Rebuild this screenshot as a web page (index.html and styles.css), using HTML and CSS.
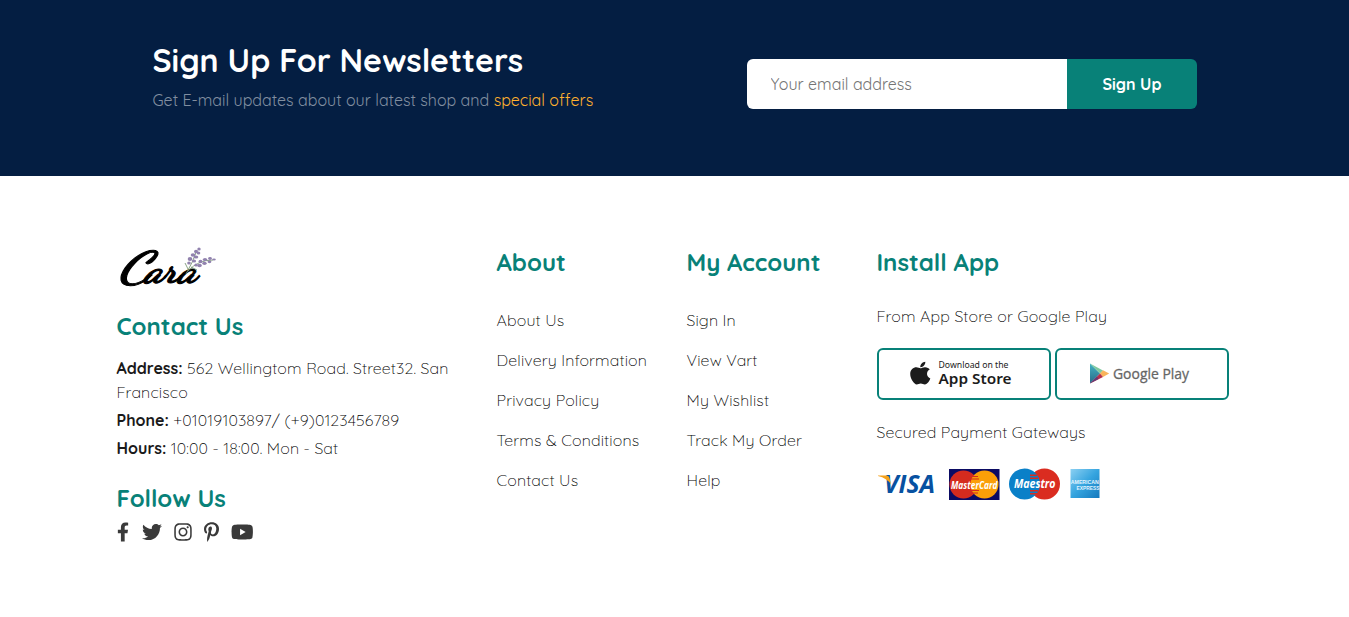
FILE: index.html
```
<!DOCTYPE html>
<html lang="en">
<head>
<meta charset="utf-8">
<title>Cara</title>
<link rel="stylesheet" href="styles.css">
</head>
<body>
<section class="newsletter">
  <div class="news-text">
    <h2>Sign Up For Newsletters</h2>
    <p>Get E-mail updates about our latest shop and <span>special offers</span></p>
  </div>
  <form class="news-form">
    <input type="text" placeholder="Your email address">
    <button type="button">Sign Up</button>
  </form>
</section>
<footer class="footer">
  <div class="col contact">
    <svg class="logo" viewBox="0 0 104 40" width="104" height="40">
      <g class="logo-word" transform="translate(.5 34.500)">
        <text class="logo-cap" x="0" y="0" textLength="32" lengthAdjust="spacingAndGlyphs">C</text>
        <text class="logo-rest" x="27" y="0" textLength="52" lengthAdjust="spacingAndGlyphs">ara</text>
      </g>
      <g fill="none" stroke="#7d9a78" stroke-width=".9"><path d="M69 27Q76 15 80 3M71 24Q81 13 96 13M71 22L68 16M74 20L80 23"/></g>
      <g fill="#9182ae">
        <ellipse cx="82" cy="2" rx="1.7" ry="1.5"/><ellipse cx="79" cy="4.500" rx="2" ry="1.700"/><ellipse cx="81.500" cy="6" rx="1.800" ry="1.600"/><ellipse cx="76" cy="8" rx="2.300" ry="1.800"/><ellipse cx="79" cy="10" rx="2.300" ry="1.600"/><ellipse cx="73" cy="12" rx="2.300" ry="1.900"/><ellipse cx="77" cy="14" rx="2.100" ry="1.600"/><ellipse cx="72" cy="16" rx="1.800" ry="1.500"/>
        <ellipse cx="97" cy="12.500" rx="1.800" ry="1.100"/><ellipse cx="93" cy="11.500" rx="1.900" ry="1.400"/><ellipse cx="92.500" cy="14.800" rx="1.900" ry="1.400"/><ellipse cx="88" cy="12.500" rx="2.200" ry="1.600"/><ellipse cx="87.500" cy="16.300" rx="2.200" ry="1.600"/><ellipse cx="83.500" cy="14.500" rx="2" ry="1.700"/><ellipse cx="82.500" cy="18.500" rx="2.300" ry="1.700"/><ellipse cx="79" cy="18" rx="1.700" ry="1.500"/>
      </g>
    </svg>
    <h4 class="h-contact">Contact Us</h4>
    <p class="l-addr"><strong>Address:</strong> 562 Wellingtom Road. Street32. San<br><span class="l-city">Francisco</span></p>
    <p class="l-phone"><strong>Phone:</strong> +01019103897/ (+9)0123456789</p>
    <p class="l-hours"><strong>Hours:</strong> 10:00 - 18:00. Mon - Sat</p>
    <h4 class="h-follow">Follow Us</h4>
    <div class="social">
      <svg width="12" height="20" viewBox="0 0 320 512"><path d="M279.140 288l14.220-92.660h-88.910v-60.130c0-25.350 12.420-50.060 52.240-50.060h40.420V6.260S260.430 0 225.360 0c-73.220 0-121.080 44.380-121.080 124.720v70.620H22.890V288h81.390v224h100.170V288z"/></svg>
      <svg width="20" height="20" viewBox="0 0 512 512"><path d="M459.370 151.716c.325 4.548.325 9.097.325 13.645 0 138.720-105.583 298.558-298.558 298.558-59.452 0-114.680-17.219-161.137-47.106 8.447.974 16.568 1.299 25.340 1.299 49.055 0 94.213-16.568 130.274-44.832-46.132-.975-84.792-31.188-98.112-72.772 6.498.974 12.995 1.624 19.818 1.624 9.421 0 18.843-1.300 27.614-3.573-48.081-9.747-84.143-51.980-84.143-102.985v-1.299c13.969 7.797 30.214 12.670 47.431 13.319-28.264-18.843-46.781-51.005-46.781-87.391 0-19.492 5.197-37.360 14.294-52.954 51.655 63.675 129.300 105.258 216.365 109.807-1.624-7.797-2.599-15.918-2.599-24.040 0-57.828 46.782-104.934 104.934-104.934 30.213 0 57.502 12.670 76.670 33.137 23.715-4.548 46.456-13.320 66.599-25.340-7.798 24.366-24.366 44.833-46.132 57.827 21.117-2.273 41.584-8.122 60.426-16.243-14.292 20.791-32.161 39.308-52.628 54.253z"/></svg>
      <svg width="18" height="20" viewBox="0 0 448 512"><path d="M224.100 141c-63.600 0-114.900 51.300-114.900 114.900s51.300 114.900 114.900 114.900S339 319.500 339 255.900 287.700 141 224.100 141zm0 189.600c-41.100 0-74.700-33.500-74.700-74.700s33.500-74.700 74.700-74.700 74.700 33.500 74.700 74.700-33.600 74.700-74.700 74.700zm146.400-194.300c0 14.900-12 26.800-26.800 26.800-14.900 0-26.800-12-26.800-26.800s12-26.800 26.800-26.800 26.800 12 26.800 26.800zm76.100 27.200c-1.700-35.900-9.900-67.700-36.200-93.900-26.200-26.200-58-34.400-93.900-36.200-37-2.100-147.900-2.100-184.900 0-35.800 1.700-67.600 9.900-93.900 36.100s-34.400 58-36.200 93.900c-2.100 37-2.100 147.900 0 184.900 1.700 35.900 9.900 67.700 36.200 93.900s58 34.400 93.900 36.200c37 2.100 147.900 2.100 184.900 0 35.900-1.700 67.700-9.900 93.900-36.200 26.200-26.200 34.400-58 36.200-93.900 2.100-37 2.100-147.800 0-184.800zM398.800 388c-7.800 19.600-22.900 34.700-42.600 42.600-29.500 11.700-99.500 9-132.100 9s-102.700 2.600-132.100-9c-19.600-7.800-34.700-22.900-42.600-42.600-11.700-29.500-9-99.500-9-132.100s-2.600-102.700 9-132.100c7.800-19.600 22.900-34.700 42.600-42.600 29.500-11.700 99.500-9 132.100-9s102.700-2.600 132.100 9c19.600 7.800 34.700 22.900 42.600 42.600 11.700 29.500 9 99.500 9 132.100s2.700 102.700-9 132.100z"/></svg>
      <svg width="15" height="20" viewBox="0 0 384 512"><path d="M204 6.500C101.400 6.500 0 74.900 0 185.600 0 256 39.600 296 63.600 296c9.900 0 15.600-27.600 15.600-35.400 0-9.300-23.700-29.100-23.700-67.800 0-80.400 61.200-137.400 140.400-137.400 68.100 0 118.500 38.700 118.500 109.800 0 53.100-21.300 152.700-90.300 152.700-24.900 0-46.200-18-46.200-43.800 0-37.800 26.400-74.400 26.400-113.400 0-66.200-93.900-54.200-93.900 25.800 0 16.800 2.100 35.400 9.600 50.700-13.800 59.400-42 147.900-42 209.100 0 18.900 2.700 37.500 4.500 56.400 3.400 3.800 1.700 3.400 6.900 1.500 50.400-69 48.600-82.500 71.400-172.800 12.300 23.400 44.100 36 69.300 36 106.200 0 153.900-103.500 153.900-196.800C384 71.300 298.200 6.500 204 6.500z"/></svg>
      <svg width="22.500" height="20" viewBox="0 0 576 512"><path d="M549.655 124.083c-6.281-23.650-24.787-42.276-48.284-48.597C458.781 64 288 64 288 64S117.220 64 74.629 75.486c-23.497 6.322-42.003 24.947-48.284 48.597-11.412 42.867-11.412 132.305-11.412 132.305s0 89.438 11.412 132.305c6.281 23.650 24.787 41.500 48.284 47.821C117.220 448 288 448 288 448s170.780 0 213.371-11.486c23.497-6.321 42.003-24.171 48.284-47.821 11.412-42.867 11.412-132.305 11.412-132.305s0-89.438-11.412-132.305zm-317.510 213.508V175.185l142.739 81.205-142.739 81.201z"/></svg>
    </div>
  </div>
  <div class="col links">
    <h4 class="h-about">About</h4>
    <a class="k1">About Us</a><a class="k2">Delivery Information</a><a class="k3">Privacy Policy</a><a class="k4">Terms &amp; Conditions</a><a class="k5">Contact Us</a>
  </div>
  <div class="col links">
    <h4 class="h-acct">My Account</h4>
    <a class="m1">Sign In</a><a class="m2">View Vart</a><a class="m3">My Wishlist</a><a class="m4">Track My Order</a><a class="m5">Help</a>
  </div>
  <div class="col install">
    <h4 class="h-install">Install App</h4>
    <p class="l-from">From App Store or Google Play</p>
    <div class="stores">
      <svg class="store" width="170" height="48" viewBox="0 0 170 48">
        <path transform="translate(31 10.200) scale(.0535 .0505)" fill="#1b1b1b" d="M318.700 268.700c-.2-36.700 16.400-64.400 50-84.800-18.800-26.900-47.200-41.700-84.700-44.600-35.500-2.800-74.300 20.700-88.500 20.700-15 0-49.400-19.700-76.400-19.700C63.300 141.200 4 184.800 4 273.500q0 39.300 14.400 81.200c12.800 36.700 59 126.700 107.200 125.200 25.200-.6 43-17.900 75.800-17.900 31.800 0 48.300 17.900 76.400 17.900 48.600-.7 90.400-82.500 102.600-119.300-65.200-30.700-61.700-90-61.700-91.900zm-56.600-164.200c27.300-32.400 24.800-61.900 24-72.500-24.100 1.400-52 16.400-67.900 34.900-17.500 19.800-27.800 44.300-25.600 71.900 26.100 2 49.900-11.400 69.500-34.300z"/>
        <text class="dl" x="59.500" y="17.800" textLength="70" lengthAdjust="spacingAndGlyphs">Download on the</text>
        <text class="as" x="59.500" y="33.500" textLength="73" lengthAdjust="spacingAndGlyphs">App Store</text>
      </svg>
      <svg class="store" width="170" height="48" viewBox="0 0 170 48">
        <defs><linearGradient id="gp" x1="0" y1="0" x2="0" y2="1"><stop offset="0" stop-color="#43b4c4"/><stop offset="1" stop-color="#276a86"/></linearGradient></defs>
        <path fill="url(#gp)" d="M33 13.500V33.500L43 23.500Z"/>
        <path fill="#7fc9a0" d="M33 13.500L46 20.500L43 23.500Z"/>
        <path fill="#f8b45b" d="M46 20.300L52.200 23.500L46 27L43 23.500Z"/>
        <path fill="#b5304b" d="M33 33.500L43 23.500L46 27Z"/><path fill="#663b78" d="M33 33.500L40 26.600L41.500 29Z"/>
        <text class="gpt" x="56" y="29.400" textLength="76" lengthAdjust="spacingAndGlyphs">Google Play</text>
      </svg>
    </div>
    <p class="l-pay">Secured Payment Gateways</p>
    <svg class="cards" width="226" height="34" viewBox="0 0 226 34">
      <defs><linearGradient id="ax" x1="0" y1="0" x2="1" y2="1"><stop offset="0" stop-color="#8bd0f2"/><stop offset=".5" stop-color="#35a4df"/><stop offset="1" stop-color="#1478bd"/></linearGradient></defs>
      <text class="visa" x="7" y="25" textLength="51" lengthAdjust="spacingAndGlyphs">VISA</text>
      <path fill="#f5a21b" d="M1 7.500H9.500Q12 7.500 12.500 10L14 16.500Q10 10 1 8Z"/>
      <path fill="#0b0b63" d="M72 1H122.500V32H72Z"/>
      <circle cx="86.500" cy="16.500" r="14" fill="#d52b1e"/><circle cx="107.500" cy="16.500" r="14" fill="#fb9f08"/>
      <path stroke="#d52b1e" stroke-width="1.200" d="M94 8.500H101M93 11H102M93 22.500H102M94 25H101"/>
      <text class="mc" x="74" y="20.500" textLength="46.500" lengthAdjust="spacingAndGlyphs">MasterCard</text>
      <circle cx="167.500" cy="16" r="15.500" fill="#da2c20"/><circle cx="147.500" cy="16" r="15.500" fill="#0a80c8"/>
      <path fill="#da2c20" d="M153 6.500H160V8H153ZM153 9.500H161V11H153ZM153 22H161V23.500H153ZM153 25H160V26.500H153Z"/>
      <text class="ms" x="137" y="20" textLength="41.500" lengthAdjust="spacingAndGlyphs">Maestro</text>
      <path fill="url(#ax)" d="M193.500 1H222.500V30H193.500Z"/>
      <text class="ae" x="193.800" y="15.800" textLength="28" lengthAdjust="spacingAndGlyphs">AMERICAN</text>
      <text class="ae" x="199.500" y="21.500" textLength="23" lengthAdjust="spacingAndGlyphs">EXPRESS</text>
    </svg>
  </div>
</footer>
</body>
</html>
```
FILE: styles.css
```
* { margin: 0; padding: 0; box-sizing: border-box; }
body { font-family: Quicksand, Inter, "Open Sans", sans-serif; background: #fff; color: #222; overflow: hidden; }
.newsletter { height: 176px; background: #041e42; padding: 39px 152px 0 152.500px; display: flex; justify-content: space-between; }
.news-text h2 { font-size: 32px; line-height: 42px; font-weight: 700; color: #fff; white-space: nowrap; }
.news-text p { margin-top: 7px; font-size: 16px; line-height: 24px; font-weight: 400; color: #818ea0; white-space: nowrap; }
.news-text span { color: #ffb02e; }
.news-form { display: flex; width: 450px; height: 50px; margin-top: 20px; }
.news-form input { width: 320px; border: 0; border-radius: 6px 0 0 6px; padding: 0 23.500px; background: #fff; font: 400 16px Quicksand, Inter, sans-serif; outline: none; }
.news-form input::placeholder { color: #757575; }
.news-form button { width: 130px; border: 0; border-radius: 0 6px 6px 0; background: #088178; color: #fff; font: 700 16px Quicksand, Inter, sans-serif; }
.footer { display: grid; grid-template-columns: 380px 190px 190px 360px; padding: 71px 0 0 116.500px; }
.col { display: flex; flex-direction: column; align-items: flex-start; }
h4 { font-size: 24px; line-height: 30px; font-weight: 700; color: #088178; white-space: nowrap; }
p, a { font-size: 16px; line-height: 24px; font-weight: 300; color: #000; white-space: nowrap; letter-spacing: .13px; }
.news-text p { letter-spacing: 0; }
strong { font-weight: 700; color: #1a1a1a; letter-spacing: 0; }
.logo { overflow: visible; }
.logo-word { font-family: "Dancing Script", "Great Vibes", "Brush Script MT", Pacifico, "Liberation Serif", serif; font-style: italic; font-weight: 700; fill: #000; stroke: #000; stroke-width: 1px; }
.logo-cap { font-size: 44px; }
.logo-rest { font-size: 38px; }
.h-contact { margin: 24px 0 15px; }
.l-phone, .l-hours { margin-top: 4px; }
.h-follow { margin: 23px 0 9px; }
.social { display: flex; fill: #3a3a3a; }
.social svg:nth-child(2) { margin-left: 13px; }
.social svg:nth-child(3) { margin-left: 12px; }
.social svg:nth-child(4) { margin-left: 12px; }
.social svg:nth-child(5) { margin-left: 12px; }
.links h4 { margin-bottom: 31px; }
.links a { margin-bottom: 16px; }
.l-from { margin-top: 27px; }
.stores { display: flex; gap: 4px; margin: 20px 0; }
.store { box-sizing: content-box; border: 2px solid #088178; border-radius: 6px; }
.dl, .as { font-family: "Noto Sans", sans-serif; fill: #1b1b1b; }
.dl { font-size: 8px; }
.as { font-size: 15px; font-weight: 600; }
.gpt { font-family: "Open Sans", sans-serif; font-size: 15px; fill: #666; stroke: #666; stroke-width: .3px; }
.cards { margin-top: 24px; }
.visa { font: italic 700 25px "Open Sans", sans-serif; fill: #0751a1; }
.mc, .ms { font: italic 700 10.500px "Open Sans", sans-serif; fill: #fff; }
.ms { font-size: 12px; }
.ae { font: 700 5.500px "Liberation Sans", sans-serif; fill: #e4f5ff; }
```
